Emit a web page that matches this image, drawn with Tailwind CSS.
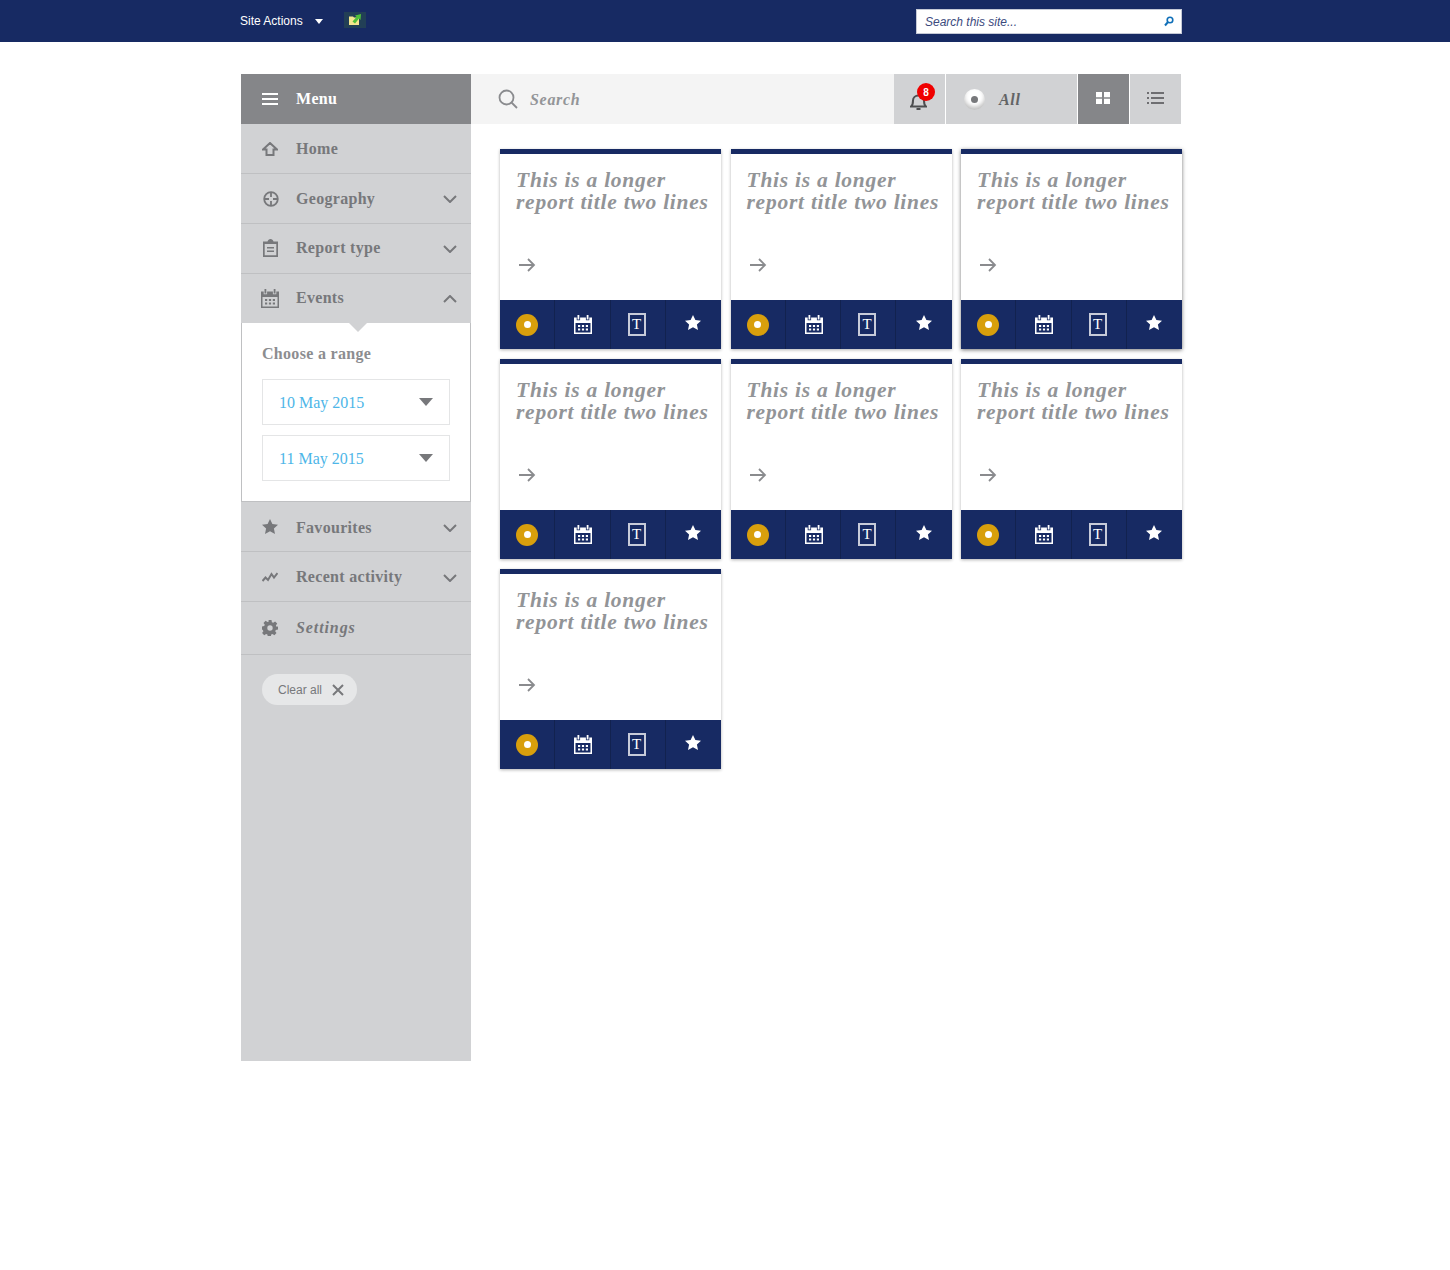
<!DOCTYPE html>
<html lang="en">
<head>
    <meta charset="UTF-8">
    <title>Reports</title>
    <script src="https://cdn.jsdelivr.net/npm/@tailwindcss/browser@4"></script>
</head>
<body class="bg-white min-h-[1270px] font-['Liberation_Sans',sans-serif]">

    <!-- shared icons -->
    <svg class="hidden">
        <symbol id="chev-down" viewBox="0 0 14 8"><path d="M1 1l6 6 6-6" fill="none" stroke="currentColor" stroke-width="2"/></symbol>
        <symbol id="chev-up" viewBox="0 0 14 8"><path d="M1 7l6-6 6 6" fill="none" stroke="currentColor" stroke-width="2"/></symbol>
        <symbol id="calendar" viewBox="0 0 18 19"><path fill-rule="evenodd" fill="currentColor" d="M3.500 0h1.800v4.500h-1.800zM12.700 0h1.800v4.500h-1.800zM0 2.500h2.700v2.800h3.400V2.500h5.800v2.800h3.400V2.500H18V19H0zM1.500 8v9.500h15V8zM4 10h2.200v2H4zm3.900 0h2.200v2H7.900zm3.900 0H14v2h-2.200zM4 13.500h2.200v2H4zm3.900 0h2.200v2H7.900zm3.900 0H14v2h-2.200z"/></symbol>
        <symbol id="star" viewBox="0 0 16 15"><path fill="currentColor" d="M8 0l2.400 5 5.600.7-4.100 3.800 1.100 5.500L8 12.300 3 15l1.100-5.500L0 5.700 5.600 5z"/></symbol>
        <symbol id="arrow" viewBox="0 0 18 14"><path d="M1 7h15M10 1l6 6-6 6" fill="none" stroke="currentColor" stroke-width="1.800"/></symbol>
    </svg>

    <!-- top bar -->
    <header class="h-[42px] bg-[#172a63]">
        <div class="ml-[240px] w-[942px] h-full flex items-center justify-between">
            <div class="flex items-center text-white text-[12px]">
                <span>Site Actions</span>
                <span class="ml-[12px] w-0 h-0 border-x-[4.5px] border-x-transparent border-t-[5px] border-t-white"></span>
                <span class="ml-[21px] mb-[3px] w-[22px] h-[16px] bg-[#223f56] flex items-center justify-center">
                    <svg width="14" height="13" viewBox="0 0 14 13"><path d="M1 3.500h4l1 1h5V12H1z" fill="#f3e58e"/><path d="M4.500 8.500L8.500 4 7 2.500 13 1l-.5 6-1.500-1.500L7 10.500z" fill="#4fbf3a"/></svg>
                </span>
            </div>
            <div class="mt-[1px] w-[266px] h-[25px] bg-white border border-[#c5c9d6] flex items-center justify-between pl-[8px] pr-[7px]">
                <span class="italic text-[12px] text-[#3b4a7d]">Search this site...</span>
                <svg width="10" height="11" viewBox="0 0 10 11"><circle cx="6" cy="4" r="2.800" fill="none" stroke="#0f6fb8" stroke-width="1.600"/><path d="M4 6L1 9.500" stroke="#0f6fb8" stroke-width="2"/></svg>
            </div>
        </div>
    </header>

    <div class="ml-[241px] mt-[32px] w-[941px] flex items-start font-['Liberation_Serif',serif]">

        <!-- sidebar -->
        <aside class="w-[230px] h-[987px] bg-[#d1d2d4] shrink-0 font-bold text-[16px] tracking-[0.3px] text-[#77787b]">
            <div class="h-[50px] bg-[#858689] text-white flex items-center pl-[21px]">
                <svg width="16" height="12" viewBox="0 0 16 12"><path d="M0 1h16M0 6h16M0 11h16" stroke="#fff" stroke-width="1.800"/></svg>
                <span class="ml-[18px]">Menu</span>
            </div>
            <div class="h-[50px] border-b border-[#bfc0c2] flex items-center pl-[21px]">
                <span class="w-[16px] flex justify-center"><svg width="16" height="14" viewBox="0 0 16 14"><path d="M1 7.500l7-6.500 7 6.500h-3.500v5.500h-7V7.500z" fill="none" stroke="currentColor" stroke-width="2"/></svg></span>
                <span class="ml-[18px]">Home</span>
            </div>
            <div class="h-[50px] border-b border-[#bfc0c2] flex items-center pl-[21px] pr-[14px]">
                <span class="w-[16px] ml-[1px] mr-[-1px] flex justify-center"><svg width="16" height="16" viewBox="0 0 16 16"><circle cx="8" cy="8" r="6.800" fill="none" stroke="currentColor" stroke-width="1.800"/><path d="M8 1v5M8 10v5M1 8h5M10 8h5" stroke="currentColor" stroke-width="1.800"/></svg></span>
                <span class="ml-[18px] grow">Geography</span>
                <svg class="w-[14px] h-[8px]"><use href="#chev-down"/></svg>
            </div>
            <div class="h-[50px] border-b border-[#bfc0c2] flex items-center pl-[21px] pr-[14px]">
                <span class="w-[16px] mb-[2px] flex justify-center"><svg width="15" height="18" viewBox="0 0 15 18"><path fill-rule="evenodd" fill="currentColor" d="M0 2.500h4.500C5 1 6 0 7.500 0S10 1 10.500 2.500H15V18H0zM1.700 5v11.300h11.600V5zM4 8h7v1.500H4zm0 3.500h7V13H4z"/></svg></span>
                <span class="ml-[18px] mb-[2px] grow">Report type</span>
                <svg class="w-[14px] h-[8px]"><use href="#chev-down"/></svg>
            </div>
            <div class="relative h-[49px] flex items-center pl-[20px] pr-[14px]">
                <svg class="w-[18px] h-[19px] shrink-0"><use href="#calendar"/></svg>
                <span class="ml-[17px] mb-[2px] grow">Events</span>
                <svg class="w-[14px] h-[8px]"><use href="#chev-up"/></svg>
            </div>
            <!-- open panel -->
            <div class="relative h-[179px] bg-white border-x border-b border-[#bfc0c2] px-[20px] pt-[22px] font-normal">
                <span class="absolute left-[107px] top-0 w-0 h-0 border-x-[9px] border-x-transparent border-t-[9px] border-t-[#d1d2d4]"></span>
                <p class="font-bold leading-[18px] text-[#8c8d90]">Choose a range</p>
                <div class="mt-[16px] h-[46px] border border-[#e4e5e6] flex items-center justify-between pl-[16px] pr-[16px] tracking-normal text-[#4db6e8]">
                    <span class="mt-[2px]">10 May 2015</span>
                    <span class="w-0 h-0 border-x-[7px] border-x-transparent border-t-[8px] border-t-[#77787b]"></span>
                </div>
                <div class="mt-[10px] h-[46px] border border-[#e4e5e6] flex items-center justify-between pl-[16px] pr-[16px] tracking-normal text-[#4db6e8]">
                    <span class="mt-[2px]">11 May 2015</span>
                    <span class="w-0 h-0 border-x-[7px] border-x-transparent border-t-[8px] border-t-[#77787b]"></span>
                </div>
            </div>
            <div class="h-[50px] border-b border-[#bfc0c2] flex items-center pl-[21px] pr-[14px]">
                <svg class="w-[16px] h-[15px]"><use href="#star"/></svg>
                <span class="ml-[18px] mt-[2px] grow">Favourites</span>
                <svg class="mt-[2px] w-[14px] h-[8px]"><use href="#chev-down"/></svg>
            </div>
            <div class="h-[50px] border-b border-[#bfc0c2] flex items-center pl-[21px] pr-[14px]">
                <svg width="16" height="10" viewBox="0 0 16 10"><path d="M.5 9l3-3.500L6 8l3.500-6L12 5.500 15.500 1" fill="none" stroke="currentColor" stroke-width="2"/></svg>
                <span class="ml-[18px] grow">Recent activity</span>
                <svg class="mt-[2px] w-[14px] h-[8px]"><use href="#chev-down"/></svg>
            </div>
            <div class="h-[53px] border-b border-[#bfc0c2] flex items-center pl-[21px]">
                <svg width="16" height="16" viewBox="0 0 16 16"><path fill-rule="evenodd" fill="currentColor" d="M6.500 0h3l.4 2.200 1.300.6L13.100 1.500l2.100 2.100-1.300 1.900.6 1.300L16 6.500v3l-2.200.4-.6 1.300 1.300 1.900-2.100 2.100-1.900-1.300-1.300.6-.4 2.200h-3l-.4-2.200-1.300-.6-1.900 1.300-2.100-2.100 1.300-1.900-.6-1.300L0 9.500v-3l2.200-.4.6-1.300-1.300-1.900 2.100-2.100 1.900 1.300 1.300-.6zM8 5.300a2.700 2.700 0 100 5.400 2.700 2.700 0 000-5.400z"/></svg>
                <span class="ml-[18px] italic tracking-[0.9px]">Settings</span>
            </div>
            <div class="ml-[21px] mt-[19px] w-[95px] h-[31px] rounded-full bg-[#e6e7e8] flex items-center pl-[16px] font-['Liberation_Sans',sans-serif] font-normal text-[12px] tracking-normal text-[#77787b]">
                <span>Clear all</span>
                <svg class="ml-[10px]" width="12" height="12" viewBox="0 0 12 12"><path d="M1 1l10 10M11 1L1 11" stroke="currentColor" stroke-width="2"/></svg>
            </div>
        </aside>

        <main class="grow min-w-0">
            <!-- filter bar -->
            <div class="h-[50px] flex text-[#77787b]">
                <div class="w-[423px] bg-[#f4f4f4] flex items-center pl-[27px]">
                    <svg width="20" height="20" viewBox="0 0 20 20"><circle cx="8.500" cy="8.500" r="7" fill="none" stroke="#8a8b8e" stroke-width="1.800"/><path d="M13.500 13.500L19 19" stroke="#8a8b8e" stroke-width="1.800"/></svg>
                    <span class="ml-[12px] mt-[2px] italic font-bold text-[16px] tracking-[0.7px] text-[#939598]">Search</span>
                </div>
                <div class="relative w-[52px] bg-[#d1d2d4] border-r border-white flex items-center justify-center">
                    <svg class="mt-[5px] mr-[3px]" width="17" height="17" viewBox="0 0 17 17"><path d="M1 13.500c2-1.500 2-3 2-6 0-3 2.300-5 5.500-5S14 4.500 14 7.500c0 3 0 4.500 2 6z" fill="none" stroke="#4d4e50" stroke-width="2"/><path d="M6.500 15h4v2h-4z" fill="#4d4e50"/></svg>
                    <span class="absolute left-[23px] top-[9px] w-[18px] h-[18px] rounded-full bg-[#f00000] text-white text-[10px] font-bold flex items-center justify-center font-['Liberation_Sans',sans-serif]">8</span>
                </div>
                <div class="w-[132px] bg-[#d1d2d4] border-r border-white flex items-center pl-[18px]">
                    <span class="w-[21px] h-[21px] rounded-full bg-white shadow-[inset_0_-3px_4px_rgba(0,0,0,0.25)] flex items-center justify-center">
                        <span class="w-[7px] h-[7px] rounded-full bg-[#77787b]"></span>
                    </span>
                    <span class="ml-[14px] mt-[2px] italic font-bold text-[16px] tracking-[0.7px] text-[#636466]">All</span>
                </div>
                <div class="w-[52px] bg-[#858689] border-r border-white flex items-center justify-center">
                    <svg class="mb-[2px] mr-[2px]" width="14" height="12" viewBox="0 0 14 12"><path d="M0 0h6v5.300H0zM8 0h6v5.300H8zM0 6.700h6V12H0zM8 6.700h6V12H8z" fill="#fff"/></svg>
                </div>
                <div class="w-[51px] bg-[#d1d2d4] flex items-center justify-center">
                    <svg class="mb-[2px]" width="17" height="12" viewBox="0 0 17 12"><path d="M4 1h13M4 6h13M4 11h13M0 1h2M0 6h2M0 11h2" stroke="#4d4e50" stroke-width="1.600"/></svg>
                </div>
            </div>

            <!-- report cards -->
            <div class="ml-[29px] mt-[25px] grid grid-cols-[repeat(3,221px)] gap-x-[9.5px] gap-y-[10px]">
                <article class="h-[200px] bg-white border-t-[5px] border-[#172a63] shadow-[0_1px_3px_rgba(0,0,0,0.3)] flex flex-col">
                    <h2 class="ml-[16px] mt-[15px] text-[21.5px] tracking-[0.75px] leading-[22px] italic font-bold text-[#929497]">This is a longer<br>report title two lines</h2>
                    <svg class="ml-[18px] mt-[45px] w-[18px] h-[14px] text-[#8a8b8e]"><use href="#arrow"/></svg>
                    <div class="mt-auto h-[49px] bg-[#172a63] grid grid-cols-4 text-white divide-x divide-[#12224f]">
                        <div class="flex items-center justify-center"><span class="w-[22px] h-[22px] rounded-full bg-[#d89f0c] flex items-center justify-center"><span class="w-[7px] h-[7px] rounded-full bg-white"></span></span></div>
                        <div class="flex items-center justify-center"><svg class="ml-[2px] mb-[1px] w-[18px] h-[19px]"><use href="#calendar"/></svg></div>
                        <div class="flex items-center justify-center"><span class="mr-[2px] w-[18px] h-[23px] border-2 border-[#c7cbd9] flex items-center justify-center text-[15px] leading-none font-normal">T</span></div>
                        <div class="flex items-center justify-center"><svg class="mb-[5px] w-[16px] h-[15px]"><use href="#star"/></svg></div>
                    </div>
                </article>
                <article class="h-[200px] bg-white border-t-[5px] border-[#172a63] shadow-[0_1px_3px_rgba(0,0,0,0.3)] flex flex-col">
                    <h2 class="ml-[16px] mt-[15px] text-[21.5px] tracking-[0.75px] leading-[22px] italic font-bold text-[#929497]">This is a longer<br>report title two lines</h2>
                    <svg class="ml-[18px] mt-[45px] w-[18px] h-[14px] text-[#8a8b8e]"><use href="#arrow"/></svg>
                    <div class="mt-auto h-[49px] bg-[#172a63] grid grid-cols-4 text-white divide-x divide-[#12224f]">
                        <div class="flex items-center justify-center"><span class="w-[22px] h-[22px] rounded-full bg-[#d89f0c] flex items-center justify-center"><span class="w-[7px] h-[7px] rounded-full bg-white"></span></span></div>
                        <div class="flex items-center justify-center"><svg class="ml-[2px] mb-[1px] w-[18px] h-[19px]"><use href="#calendar"/></svg></div>
                        <div class="flex items-center justify-center"><span class="mr-[2px] w-[18px] h-[23px] border-2 border-[#c7cbd9] flex items-center justify-center text-[15px] leading-none font-normal">T</span></div>
                        <div class="flex items-center justify-center"><svg class="mb-[5px] w-[16px] h-[15px]"><use href="#star"/></svg></div>
                    </div>
                </article>
                <article class="h-[200px] bg-white border-t-[5px] border-[#172a63] shadow-[0_1px_4px_rgba(0,0,0,0.55)] flex flex-col">
                    <h2 class="ml-[16px] mt-[15px] text-[21.5px] tracking-[0.75px] leading-[22px] italic font-bold text-[#929497]">This is a longer<br>report title two lines</h2>
                    <svg class="ml-[18px] mt-[45px] w-[18px] h-[14px] text-[#8a8b8e]"><use href="#arrow"/></svg>
                    <div class="mt-auto h-[49px] bg-[#172a63] grid grid-cols-4 text-white divide-x divide-[#12224f]">
                        <div class="flex items-center justify-center"><span class="w-[22px] h-[22px] rounded-full bg-[#d89f0c] flex items-center justify-center"><span class="w-[7px] h-[7px] rounded-full bg-white"></span></span></div>
                        <div class="flex items-center justify-center"><svg class="ml-[2px] mb-[1px] w-[18px] h-[19px]"><use href="#calendar"/></svg></div>
                        <div class="flex items-center justify-center"><span class="mr-[2px] w-[18px] h-[23px] border-2 border-[#c7cbd9] flex items-center justify-center text-[15px] leading-none font-normal">T</span></div>
                        <div class="flex items-center justify-center"><svg class="mb-[5px] w-[16px] h-[15px]"><use href="#star"/></svg></div>
                    </div>
                </article>
                <article class="h-[200px] bg-white border-t-[5px] border-[#172a63] shadow-[0_1px_3px_rgba(0,0,0,0.3)] flex flex-col">
                    <h2 class="ml-[16px] mt-[15px] text-[21.5px] tracking-[0.75px] leading-[22px] italic font-bold text-[#929497]">This is a longer<br>report title two lines</h2>
                    <svg class="ml-[18px] mt-[45px] w-[18px] h-[14px] text-[#8a8b8e]"><use href="#arrow"/></svg>
                    <div class="mt-auto h-[49px] bg-[#172a63] grid grid-cols-4 text-white divide-x divide-[#12224f]">
                        <div class="flex items-center justify-center"><span class="w-[22px] h-[22px] rounded-full bg-[#d89f0c] flex items-center justify-center"><span class="w-[7px] h-[7px] rounded-full bg-white"></span></span></div>
                        <div class="flex items-center justify-center"><svg class="ml-[2px] mb-[1px] w-[18px] h-[19px]"><use href="#calendar"/></svg></div>
                        <div class="flex items-center justify-center"><span class="mr-[2px] w-[18px] h-[23px] border-2 border-[#c7cbd9] flex items-center justify-center text-[15px] leading-none font-normal">T</span></div>
                        <div class="flex items-center justify-center"><svg class="mb-[5px] w-[16px] h-[15px]"><use href="#star"/></svg></div>
                    </div>
                </article>
                <article class="h-[200px] bg-white border-t-[5px] border-[#172a63] shadow-[0_1px_3px_rgba(0,0,0,0.3)] flex flex-col">
                    <h2 class="ml-[16px] mt-[15px] text-[21.5px] tracking-[0.75px] leading-[22px] italic font-bold text-[#929497]">This is a longer<br>report title two lines</h2>
                    <svg class="ml-[18px] mt-[45px] w-[18px] h-[14px] text-[#8a8b8e]"><use href="#arrow"/></svg>
                    <div class="mt-auto h-[49px] bg-[#172a63] grid grid-cols-4 text-white divide-x divide-[#12224f]">
                        <div class="flex items-center justify-center"><span class="w-[22px] h-[22px] rounded-full bg-[#d89f0c] flex items-center justify-center"><span class="w-[7px] h-[7px] rounded-full bg-white"></span></span></div>
                        <div class="flex items-center justify-center"><svg class="ml-[2px] mb-[1px] w-[18px] h-[19px]"><use href="#calendar"/></svg></div>
                        <div class="flex items-center justify-center"><span class="mr-[2px] w-[18px] h-[23px] border-2 border-[#c7cbd9] flex items-center justify-center text-[15px] leading-none font-normal">T</span></div>
                        <div class="flex items-center justify-center"><svg class="mb-[5px] w-[16px] h-[15px]"><use href="#star"/></svg></div>
                    </div>
                </article>
                <article class="h-[200px] bg-white border-t-[5px] border-[#172a63] shadow-[0_1px_3px_rgba(0,0,0,0.3)] flex flex-col">
                    <h2 class="ml-[16px] mt-[15px] text-[21.5px] tracking-[0.75px] leading-[22px] italic font-bold text-[#929497]">This is a longer<br>report title two lines</h2>
                    <svg class="ml-[18px] mt-[45px] w-[18px] h-[14px] text-[#8a8b8e]"><use href="#arrow"/></svg>
                    <div class="mt-auto h-[49px] bg-[#172a63] grid grid-cols-4 text-white divide-x divide-[#12224f]">
                        <div class="flex items-center justify-center"><span class="w-[22px] h-[22px] rounded-full bg-[#d89f0c] flex items-center justify-center"><span class="w-[7px] h-[7px] rounded-full bg-white"></span></span></div>
                        <div class="flex items-center justify-center"><svg class="ml-[2px] mb-[1px] w-[18px] h-[19px]"><use href="#calendar"/></svg></div>
                        <div class="flex items-center justify-center"><span class="mr-[2px] w-[18px] h-[23px] border-2 border-[#c7cbd9] flex items-center justify-center text-[15px] leading-none font-normal">T</span></div>
                        <div class="flex items-center justify-center"><svg class="mb-[5px] w-[16px] h-[15px]"><use href="#star"/></svg></div>
                    </div>
                </article>
                <article class="h-[200px] bg-white border-t-[5px] border-[#172a63] shadow-[0_1px_3px_rgba(0,0,0,0.3)] flex flex-col">
                    <h2 class="ml-[16px] mt-[15px] text-[21.5px] tracking-[0.75px] leading-[22px] italic font-bold text-[#929497]">This is a longer<br>report title two lines</h2>
                    <svg class="ml-[18px] mt-[45px] w-[18px] h-[14px] text-[#8a8b8e]"><use href="#arrow"/></svg>
                    <div class="mt-auto h-[49px] bg-[#172a63] grid grid-cols-4 text-white divide-x divide-[#12224f]">
                        <div class="flex items-center justify-center"><span class="w-[22px] h-[22px] rounded-full bg-[#d89f0c] flex items-center justify-center"><span class="w-[7px] h-[7px] rounded-full bg-white"></span></span></div>
                        <div class="flex items-center justify-center"><svg class="ml-[2px] mb-[1px] w-[18px] h-[19px]"><use href="#calendar"/></svg></div>
                        <div class="flex items-center justify-center"><span class="mr-[2px] w-[18px] h-[23px] border-2 border-[#c7cbd9] flex items-center justify-center text-[15px] leading-none font-normal">T</span></div>
                        <div class="flex items-center justify-center"><svg class="mb-[5px] w-[16px] h-[15px]"><use href="#star"/></svg></div>
                    </div>
                </article>
            </div>
        </main>
    </div>
</body>
</html>
